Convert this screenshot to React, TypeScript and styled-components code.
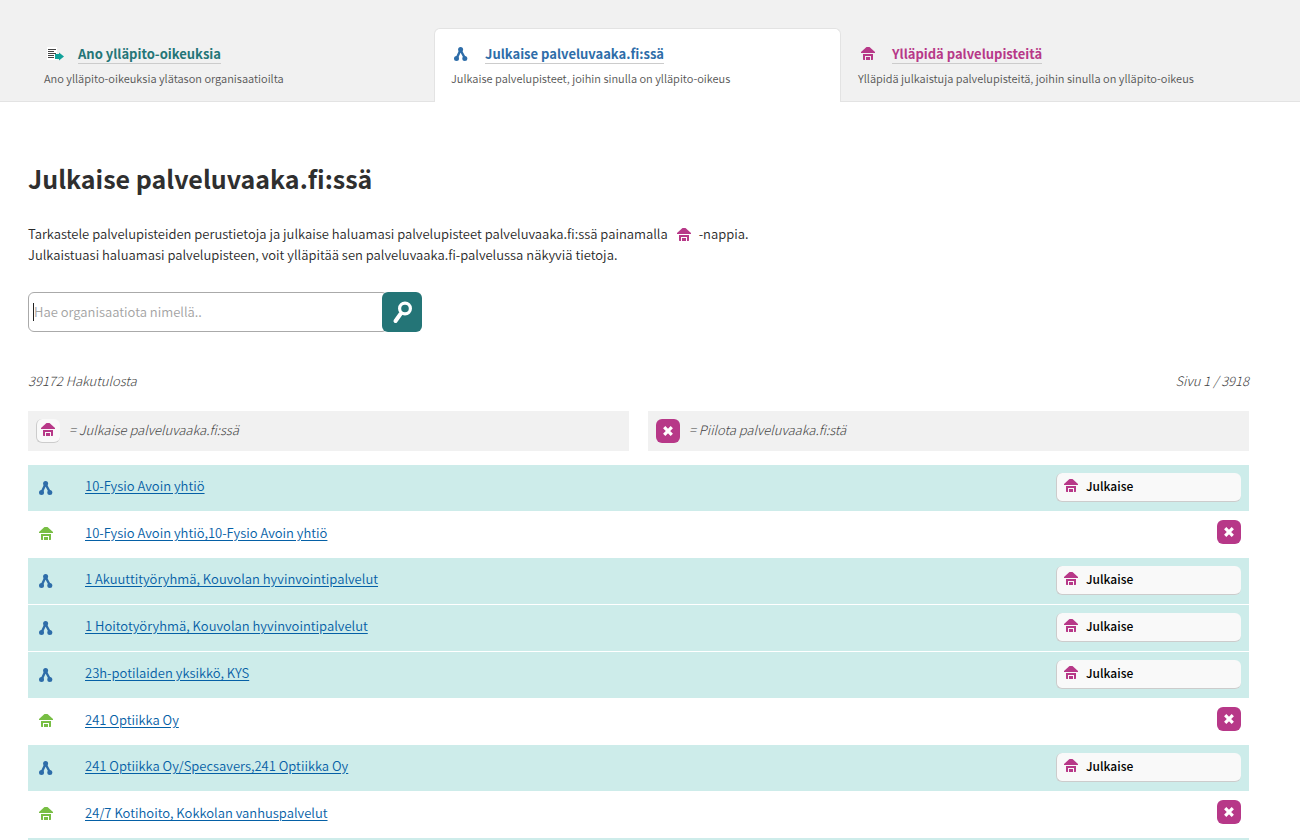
import React from "react";
import styled, { createGlobalStyle } from "styled-components";

const Global = createGlobalStyle`
  *, *::before, *::after { box-sizing: border-box; }
  body {
    margin: 0;
    background: #fff;
    color: #2a2a2a;
    font-family: "Noto Sans CJK JP", "Noto Sans", sans-serif;
    font-size: 13px;
    font-weight: 350;
    line-height: 21px;
  }
`;

const PINK = "#b73888";
const BLUE = "#2e6da9";
const TEAL = "#247577";
const GREEN = "#77be43";

const Svg = styled.svg`
  display: block;
  flex: none;
`;

const HomeIcon = ({ color = PINK }: { color?: string }) => (
  <Svg width="14" height="14" viewBox="0 0 14 14" aria-hidden="true">
    <path fill={color} d="M5.5 0 H8.5 L14 5 V6 H0 V5 Z" />
    <path fill={color} d="M2 7 H12 V12.5 L11.5 13 H10 V9 H4 V13 H2.5 L2 12.5 Z M5 10 H9 V13 H5 Z" />
  </Svg>
);

const NetworkIcon = () => (
  <Svg width="14" height="14" viewBox="0 0 14 14" aria-hidden="true">
    <path d="M6.5 3 L2.8 11 M6.5 3 L10.8 11" stroke={BLUE} strokeWidth="2.4" fill="none" />
    <g fill={BLUE}>
      <circle cx="6.6" cy="2.6" r="2.5" />
      <circle cx="2.5" cy="11.4" r="2.5" />
      <circle cx="10.8" cy="11.4" r="2.5" />
    </g>
  </Svg>
);

const RequestIcon = () => (
  <Svg width="18" height="14" viewBox="0 0 18 14" aria-hidden="true">
    <path fill="#fff" d="M0 0 H10 V13 H0 Z" />
    <path stroke="#444" d="M1 2.5 H9 M1 4.5 H7 M1 6.5 H9 M1 8.5 H7 M1 10.5 H7" />
    <path fill="#12a19a" d="M8 7 H12 V5.5 L17 9.5 L12 13.5 V12 H8 Z" />
  </Svg>
);

const CloseIcon = () => (
  <Svg width="10" height="10" viewBox="0 0 10 10" aria-hidden="true">
    <path stroke="#fff" strokeWidth="3.2" d="M1.2 1.2 L8.8 8.8 M8.8 1.2 L1.2 8.8" />
  </Svg>
);

const SearchIcon = () => (
  <Svg width="22" height="24" viewBox="0 0 22 24" aria-hidden="true">
    <circle cx="14" cy="8.5" r="5.4" stroke="#fff" strokeWidth="3.2" fill="none" />
    <path stroke="#fff" strokeWidth="4" strokeLinecap="round" d="M9.5 14 L4.5 21" />
  </Svg>
);

const TabBar = styled.nav`
  display: grid;
  grid-template-columns: repeat(3, 1fr);
  padding: 28px 52px 0 27px;
  background: #f1f1f1;
  box-shadow: inset 0 -1px #e3e3e3;
`;

const Tab = styled.div<{ $active?: boolean }>`
  height: 74px;
  padding: 15px 16px;
  border: 1px solid ${(p) => (p.$active ? "#e3e3e3" : "transparent")};
  border-bottom: 0;
  border-radius: 6px 6px 0 0;
  background: ${(p) => (p.$active ? "#fff" : "transparent")};
`;

const TabHead = styled.div`
  display: flex;
  align-items: center;
  height: 20px;
`;

const TabIcon = styled.span`
  width: 34px;
  padding-left: 3px;
`;

const TabLink = styled.a<{ $color: string }>`
  height: 19px;
  border-bottom: 1px solid #ccc;
  color: ${(p) => p.$color};
  font-weight: 700;
  line-height: 18px;
  text-decoration: none;
`;

const TabNote = styled.p`
  margin: 4px 0 0;
  color: #555;
  font-size: 11px;
  line-height: 20px;
`;

const Main = styled.main`
  padding: 58px 51px 0 28px;
`;

const Title = styled.h1`
  margin: 0;
  color: #2f2f2f;
  font-size: 25px;
  line-height: 36px;
`;

const Intro = styled.p`
  margin: 27px 0 0;
`;

const InlineIcon = styled.span`
  display: inline-block;
  margin: 0 8px 0 6px;
  vertical-align: -3px;
`;

const Search = styled.form`
  position: relative;
  display: flex;
  width: 394px;
  height: 40px;
  margin-top: 27px;
`;

const SearchInput = styled.input`
  flex: 1;
  min-width: 0;
  margin-right: -6px;
  padding: 0 5px 2px;
  border: 1px solid #aaa;
  border-radius: 6px;
  outline: 0;
  color: #333;
  font: inherit;
  &::placeholder { color: #a3a3a3; opacity: 1; }
`;

const Caret = styled.span`
  position: absolute;
  top: 11px;
  left: 5px;
  width: 1px;
  height: 18px;
  background: #222;
`;

const SearchButton = styled.button`
  display: grid;
  place-items: center;
  position: relative;
  width: 40px;
  padding: 0;
  border: 0;
  border-radius: 6px;
  background: ${TEAL};
`;

const Summary = styled.div`
  display: flex;
  justify-content: space-between;
  margin-top: 38px;
  color: #444;
  font-style: italic;
  font-weight: 300;
`;

const Legend = styled.div`
  display: grid;
  grid-template-columns: 1fr 1fr;
  gap: 19px;
  margin: 20px 0 14px;
`;

const LegendItem = styled.div`
  display: flex;
  gap: 9px;
  height: 40px;
  padding: 8px;
  background: #f1f1f1;
  color: #444;
  font-style: italic;
  font-weight: 300;
`;

const PublishBadge = styled.span`
  display: grid;
  place-items: center;
  width: 24px;
  height: 24px;
  padding: 0 1px 1px 0;
  border: 1px solid #ccc;
  border-width: 0 0 1px 1px;
  border-radius: 6px;
  background: #f9f9f9;
`;

const HideBadge = styled.span`
  display: grid;
  place-items: center;
  width: 24px;
  height: 24px;
  border-radius: 6px;
  background: ${PINK};
`;

const List = styled.ul`
  margin: 0;
  padding: 0;
  list-style: none;
`;

const Row = styled.li<{ $published: boolean }>`
  display: flex;
  align-items: flex-start;
  height: 46px;
  margin-bottom: ${(p) => (p.$published ? 0 : 1)}px;
  padding: 8px 8px 0 11px;
  background: ${(p) => (p.$published ? "#fff" : "#cdecea")};
`;

const RowIcon = styled.span<{ $published: boolean }>`
  width: 46px;
  padding-top: ${(p) => (p.$published ? 7 : 8)}px;
`;

const RowLink = styled.a`
  padding-top: 2px;
  color: #0560a6;
  text-underline-offset: 2px;
`;

const PublishButton = styled.button`
  display: flex;
  align-items: flex-start;
  gap: 8px;
  width: 185px;
  height: 29px;
  margin-left: auto;
  padding: 6px 7px;
  border: 1px solid #ccc;
  border-width: 0 0 1px 1px;
  border-radius: 6px;
  background: #f9f9f9;
  color: #000;
  font: 500 12px/13px "Noto Sans CJK JP", "Noto Sans", sans-serif;
`;

const HideButton = styled.button`
  display: grid;
  place-items: center;
  width: 24px;
  height: 24px;
  margin-left: auto;
  padding: 0;
  border: 0;
  border-radius: 6px;
  background: ${PINK};
`;

const rows = [
  { name: "10-Fysio Avoin yhtiö", published: false },
  { name: "10-Fysio Avoin yhtiö,10-Fysio Avoin yhtiö", published: true },
  { name: "1 Akuuttityöryhmä, Kouvolan hyvinvointipalvelut", published: false },
  { name: "1 Hoitotyöryhmä, Kouvolan hyvinvointipalvelut", published: false },
  { name: "23h-potilaiden yksikkö, KYS", published: false },
  { name: "241 Optiikka Oy", published: true },
  { name: "241 Optiikka Oy/Specsavers,241 Optiikka Oy", published: false },
  { name: "24/7 Kotihoito, Kokkolan vanhuspalvelut", published: true },
];

export default function App() {
  return (
    <>
      <Global />
      <TabBar>
        <Tab>
          <TabHead>
            <TabIcon><RequestIcon /></TabIcon>
            <TabLink href="#ano" $color={TEAL}>Ano ylläpito-oikeuksia</TabLink>
          </TabHead>
          <TabNote>Ano ylläpito-oikeuksia ylätason organisaatioilta</TabNote>
        </Tab>
        <Tab $active>
          <TabHead>
            <TabIcon><NetworkIcon /></TabIcon>
            <TabLink href="#julkaise" $color={BLUE}>Julkaise palveluvaaka.fi:ssä</TabLink>
          </TabHead>
          <TabNote>Julkaise palvelupisteet, joihin sinulla on ylläpito-oikeus</TabNote>
        </Tab>
        <Tab>
          <TabHead>
            <TabIcon><HomeIcon /></TabIcon>
            <TabLink href="#yllapida" $color={PINK}>Ylläpidä palvelupisteitä</TabLink>
          </TabHead>
          <TabNote>Ylläpidä julkaistuja palvelupisteitä, joihin sinulla on ylläpito-oikeus</TabNote>
        </Tab>
      </TabBar>
      <Main>
        <Title>Julkaise palveluvaaka.fi:ssä</Title>
        <Intro>
          Tarkastele palvelupisteiden perustietoja ja julkaise haluamasi palvelupisteet palveluvaaka.fi:ssä painamalla{" "}
          <InlineIcon><HomeIcon /></InlineIcon>
          -nappia.
          <br />
          Julkaistuasi haluamasi palvelupisteen, voit ylläpitää sen palveluvaaka.fi-palvelussa näkyviä tietoja.
        </Intro>
        <Search>
          <SearchInput aria-label="Hae organisaatiota" placeholder="Hae organisaatiota nimellä.." />
          <Caret />
          <SearchButton type="button" aria-label="Hae"><SearchIcon /></SearchButton>
        </Search>
        <Summary>
          <span>39172 Hakutulosta</span>
          <span>Sivu 1 / 3918</span>
        </Summary>
        <Legend>
          <LegendItem>
            <PublishBadge><HomeIcon /></PublishBadge>
            <span>= Julkaise palveluvaaka.fi:ssä</span>
          </LegendItem>
          <LegendItem>
            <HideBadge><CloseIcon /></HideBadge>
            <span>= Piilota palveluvaaka.fi:stä</span>
          </LegendItem>
        </Legend>
        <List>
          {rows.map((row) => (
            <Row key={row.name} $published={row.published}>
              <RowIcon $published={row.published}>
                {row.published ? <HomeIcon color={GREEN} /> : <NetworkIcon />}
              </RowIcon>
              <RowLink href="#palvelupiste">{row.name}</RowLink>
              {row.published ? (
                <HideButton type="button" aria-label="Piilota"><CloseIcon /></HideButton>
              ) : (
                <PublishButton type="button"><HomeIcon />Julkaise</PublishButton>
              )}
            </Row>
          ))}
          <Row $published={false} />
        </List>
      </Main>
    </>
  );
}
